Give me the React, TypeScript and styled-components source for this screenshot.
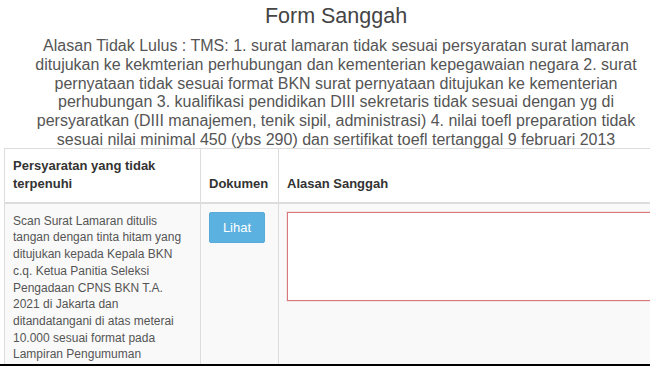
import React from "react";
import styled, { createGlobalStyle } from "styled-components";

const GlobalStyle = createGlobalStyle`
  html, body {
    margin: 0;
    padding: 0;
    background: #ffffff;
  }
  body {
    font-family: "Liberation Sans", Arial, sans-serif;
  }
`;

const App = () => (
  <Page>
    <GlobalStyle />
    <Content>
      <Title>Form Sanggah</Title>
      <Reason>
        Alasan Tidak Lulus : TMS: 1. surat lamaran tidak sesuai persyaratan
        surat lamaran ditujukan ke kekmterian perhubungan dan kementerian
        kepegawaian negara 2. surat pernyataan tidak sesuai format BKN surat
        pernyataan ditujukan ke kementerian perhubungan 3. kualifikasi
        pendidikan DIII sekretaris tidak sesuai dengan yg di persyaratkan (DIII
        manajemen, tenik sipil, administrasi) 4. nilai toefl preparation tidak
        sesuai nilai minimal 450 (ybs 290) dan sertifikat toefl tertanggal 9
        februari 2013
      </Reason>
      <Table>
        <colgroup>
          <col style={{ width: 196 }} />
          <col style={{ width: 78 }} />
          <col />
        </colgroup>
        <thead>
          <tr>
            <HeadCell>Persyaratan yang tidak terpenuhi</HeadCell>
            <HeadCell>Dokumen</HeadCell>
            <HeadCell>Alasan Sanggah</HeadCell>
          </tr>
        </thead>
        <tbody>
          <BodyRow>
            <BodyCell>
              Scan Surat Lamaran ditulis tangan dengan tinta hitam yang
              ditujukan kepada Kepala BKN c.q. Ketua Panitia Seleksi Pengadaan
              CPNS BKN T.A. 2021 di Jakarta dan ditandatangani di atas meterai
              10.000 sesuai format pada Lampiran Pengumuman
            </BodyCell>
            <BodyCell>
              <ViewButton type="button">Lihat</ViewButton>
            </BodyCell>
            <BodyCell>
              <ReasonInput />
            </BodyCell>
          </BodyRow>
        </tbody>
      </Table>
    </Content>
  </Page>
);

export default App;

const Page = styled.div`
  width: 650px;
  height: 366px;
  box-sizing: border-box;
  border-bottom: 2px solid #000;
  overflow: hidden;
`;

const Content = styled.div`
  width: 664px;
  margin-left: 4px;
`;

const Title = styled.h2`
  margin: 3px 0 0;
  font-size: 21.5px;
  line-height: 26px;
  font-weight: 400;
  color: #444;
  text-align: center;
`;

const Reason = styled.p`
  margin: 8px 0 -2px;
  padding: 0 12px;
  font-size: 16px;
  line-height: 18.8px;
  color: #555;
  text-align: center;
`;

const Table = styled.table`
  width: 720px;
  border-collapse: collapse;
  table-layout: fixed;
  border: 1px solid #ddd;
`;

const HeadCell = styled.th`
  padding: 8px;
  font-size: 13px;
  line-height: 18.5px;
  font-weight: 700;
  color: #333;
  text-align: left;
  vertical-align: bottom;
  border: 1px solid #ddd;
  border-bottom: 2px solid #ddd;
  background: #fff;
`;

const BodyRow = styled.tr`
  background: #f9f9f9;
`;

const BodyCell = styled.td`
  padding: 8px;
  font-size: 12px;
  line-height: 16.7px;
  color: #555;
  vertical-align: top;
  border: 1px solid #ddd;

  &:first-child {
    padding-top: 9px;
  }
`;

const ViewButton = styled.button`
  display: block;
  width: 56px;
  height: 31px;
  padding: 0;
  border: 1px solid #56abd9;
  border-radius: 2px;
  background: #5bb1df;
  color: #fff;
  font-family: "Liberation Sans", Arial, sans-serif;
  font-size: 13px;
`;

const ReasonInput = styled.textarea`
  display: block;
  box-sizing: border-box;
  width: 100%;
  height: 89px;
  margin: 0;
  border: 1px solid #d9787c;
  border-radius: 0;
  background: #fff;
  box-shadow: 0 0 0 1px rgba(217, 120, 124, 0.15);
  resize: none;
`;
